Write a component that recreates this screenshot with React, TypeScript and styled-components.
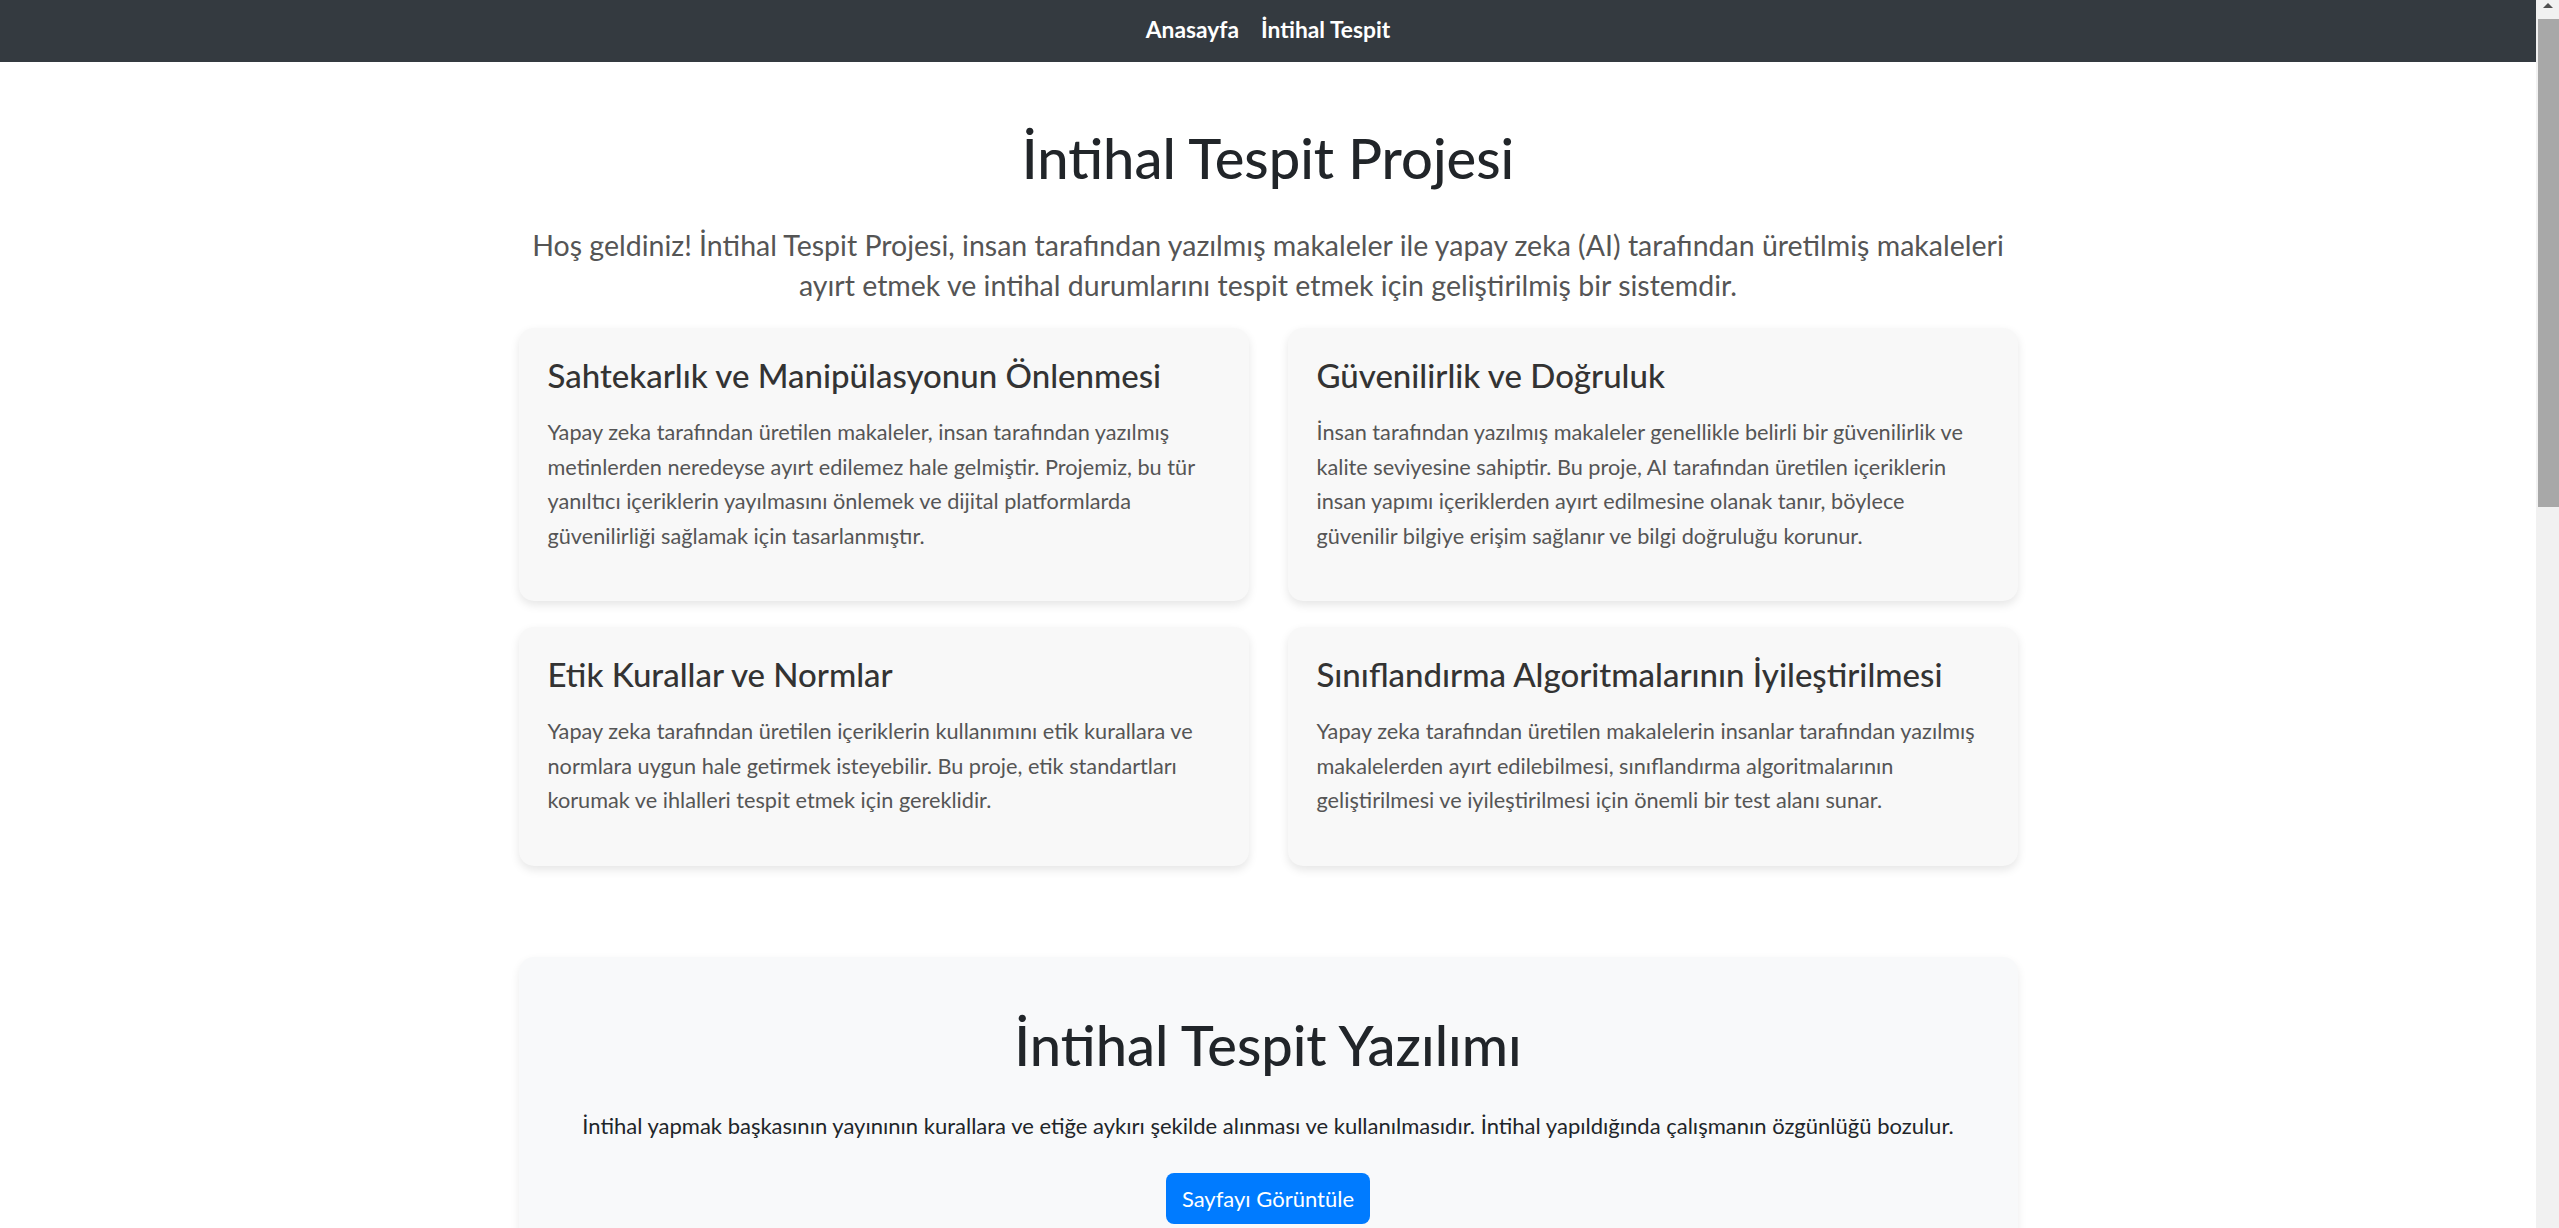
import React from "react";
import styled, { createGlobalStyle } from "styled-components";

const GlobalStyle = createGlobalStyle`
  html, body { margin: 0; padding: 0; background: #fff; }
  body {
    font-family: Lato, "Open Sans", "Noto Sans", sans-serif;
    color: #212529;
    padding-right: 23px;
  }
  * { box-sizing: border-box; }
`;

/* Emulates the browser's classic vertical scrollbar seen in the screenshot */
const ScrollTrack = styled.div`
  position: fixed;
  top: 0;
  right: 0;
  width: 23px;
  height: 100vh;
  background: #f1f1f1;
  z-index: 10;
`;

const ScrollArrow = styled.div`
  position: absolute;
  top: 3px;
  left: 7px;
  width: 0;
  height: 0;
  border-left: 5px solid transparent;
  border-right: 5px solid transparent;
  border-bottom: 5px solid #505050;
`;

const ScrollThumb = styled.div`
  position: absolute;
  top: 19px;
  left: 2px;
  right: 0;
  height: 488px;
  background: #a8a8a8;
`;

const NavBar = styled.nav`
  height: 62px;
  background: #343a40;
  display: flex;
  justify-content: center;
  align-items: center;
  gap: 22px;
  padding-bottom: 4px;
`;

const NavLink = styled.a`
  color: #fff;
  font-weight: 700;
  font-size: 22.8px;
  text-decoration: none;
  cursor: pointer;
`;

const Main = styled.main`
  width: 1499px;
  margin: 0 auto;
  padding-top: 63px;
  padding-bottom: 120px;
`;

const PageTitle = styled.h1`
  margin: 0;
  text-align: center;
  font-size: 56px;
  line-height: 66px;
  font-weight: 500;
  color: #212529;
`;

const Lead = styled.p`
  margin: 34px auto 0;
  text-align: center;
  font-size: 28.5px;
  line-height: 40px;
  font-weight: 400;
  color: #555;
`;

const CardGrid = styled.section`
  margin-top: 23px;
  display: grid;
  grid-template-columns: 1fr 1fr;
  column-gap: 39px;
  row-gap: 26px;
`;

const Card = styled.article`
  background: #f8f8f8;
  border-radius: 15px;
  box-shadow: 0 4px 10px rgba(0, 0, 0, 0.1);
  padding: 29px 29px 29px;
`;

const CardTitle = styled.h3`
  margin: 0 0 21px;
  font-size: 33px;
  line-height: 37px;
  font-weight: 500;
  color: #333;
`;

const CardText = styled.p`
  margin: 0 0 19px;
  font-size: 21.7px;
  line-height: 34.5px;
  color: #555;
`;

const ToolSection = styled.section`
  margin-top: 91px;
  background: #f8f9fa;
  border-radius: 15px;
  box-shadow: 0 4px 10px rgba(0, 0, 0, 0.08);
  padding: 55px 40px 60px;
  text-align: center;
`;

const ToolText = styled.p`
  margin: 32px 0 0;
  font-size: 22px;
  line-height: 31px;
  color: #212529;
`;

const PrimaryButton = styled.button`
  margin-top: 32px;
  height: 51px;
  padding: 0 16px;
  background: #007bff;
  color: #fff;
  border: none;
  border-radius: 8px;
  font-family: inherit;
  font-size: 22px;
  cursor: pointer;
`;

const cards = [
  {
    title: "Sahtekarlık ve Manipülasyonun Önlenmesi",
    text: "Yapay zeka tarafından üretilen makaleler, insan tarafından yazılmış metinlerden neredeyse ayırt edilemez hale gelmiştir. Projemiz, bu tür yanıltıcı içeriklerin yayılmasını önlemek ve dijital platformlarda güvenilirliği sağlamak için tasarlanmıştır.",
  },
  {
    title: "Güvenilirlik ve Doğruluk",
    text: "İnsan tarafından yazılmış makaleler genellikle belirli bir güvenilirlik ve kalite seviyesine sahiptir. Bu proje, AI tarafından üretilen içeriklerin insan yapımı içeriklerden ayırt edilmesine olanak tanır, böylece güvenilir bilgiye erişim sağlanır ve bilgi doğruluğu korunur.",
  },
  {
    title: "Etik Kurallar ve Normlar",
    text: "Yapay zeka tarafından üretilen içeriklerin kullanımını etik kurallara ve normlara uygun hale getirmek isteyebilir. Bu proje, etik standartları korumak ve ihlalleri tespit etmek için gereklidir.",
  },
  {
    title: "Sınıflandırma Algoritmalarının İyileştirilmesi",
    text: "Yapay zeka tarafından üretilen makalelerin insanlar tarafından yazılmış makalelerden ayırt edilebilmesi, sınıflandırma algoritmalarının geliştirilmesi ve iyileştirilmesi için önemli bir test alanı sunar.",
  },
];

export default function App() {
  return (
    <>
      <GlobalStyle />
      <ScrollTrack aria-hidden="true">
        <ScrollArrow />
        <ScrollThumb />
      </ScrollTrack>
      <NavBar>
        <NavLink>Anasayfa</NavLink>
        <NavLink>İntihal Tespit</NavLink>
      </NavBar>
      <Main>
        <PageTitle>İntihal Tespit Projesi</PageTitle>
        <Lead>
          Hoş geldiniz! İntihal Tespit Projesi, insan tarafından yazılmış makaleler ile yapay zeka (AI) tarafından üretilmiş makaleleri ayırt etmek ve intihal durumlarını tespit etmek için geliştirilmiş bir sistemdir.
        </Lead>
        <CardGrid>
          {cards.map((c) => (
            <Card key={c.title}>
              <CardTitle>{c.title}</CardTitle>
              <CardText>{c.text}</CardText>
            </Card>
          ))}
        </CardGrid>
        <ToolSection>
          <PageTitle>İntihal Tespit Yazılımı</PageTitle>
          <ToolText>
            İntihal yapmak başkasının yayınının kurallara ve etiğe aykırı şekilde alınması ve kullanılmasıdır. İntihal yapıldığında çalışmanın özgünlüğü bozulur.
          </ToolText>
          <PrimaryButton>Sayfayı Görüntüle</PrimaryButton>
        </ToolSection>
      </Main>
    </>
  );
}
